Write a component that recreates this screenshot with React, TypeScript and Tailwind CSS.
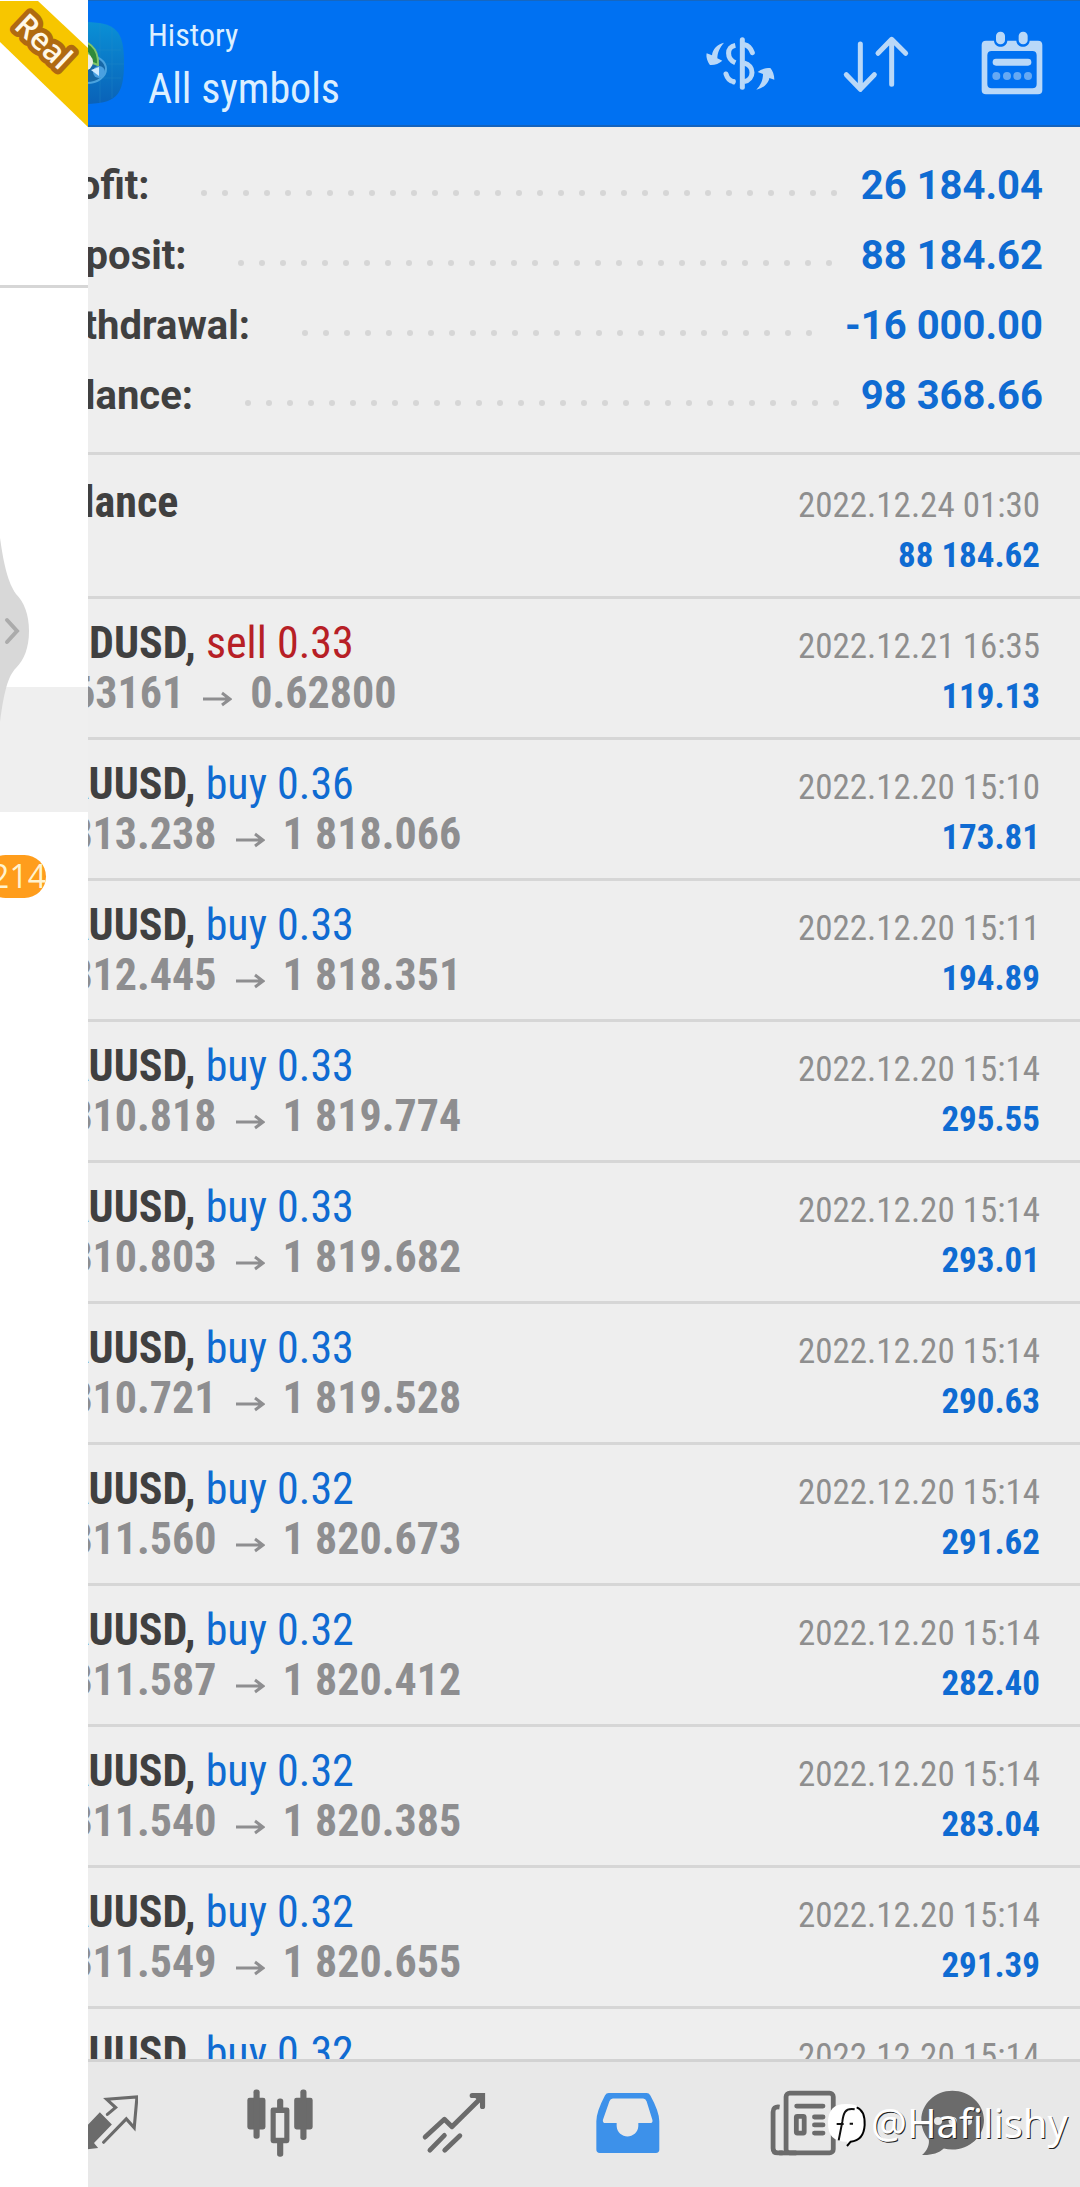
import React from "react";

type Deal = {
  symbol: string;
  side?: "buy" | "sell";
  lots?: string;
  open?: string;
  close?: string;
  time: string;
  profit?: string;
};

const summary = [
  { label: "Profit:", value: "26 184.04" },
  { label: "Deposit:", value: "88 184.62" },
  { label: "Withdrawal:", value: "-16 000.00" },
  { label: "Balance:", value: "98 368.66" },
];

const deals: Deal[] = [
  { symbol: "Balance", time: "2022.12.24 01:30", profit: "88 184.62" },
  { symbol: "AUDUSD", side: "sell", lots: "0.33", open: "0.63161", close: "0.62800", time: "2022.12.21 16:35", profit: "119.13" },
  { symbol: "XAUUSD", side: "buy", lots: "0.36", open: "1 813.238", close: "1 818.066", time: "2022.12.20 15:10", profit: "173.81" },
  { symbol: "XAUUSD", side: "buy", lots: "0.33", open: "1 812.445", close: "1 818.351", time: "2022.12.20 15:11", profit: "194.89" },
  { symbol: "XAUUSD", side: "buy", lots: "0.33", open: "1 810.818", close: "1 819.774", time: "2022.12.20 15:14", profit: "295.55" },
  { symbol: "XAUUSD", side: "buy", lots: "0.33", open: "1 810.803", close: "1 819.682", time: "2022.12.20 15:14", profit: "293.01" },
  { symbol: "XAUUSD", side: "buy", lots: "0.33", open: "1 810.721", close: "1 819.528", time: "2022.12.20 15:14", profit: "290.63" },
  { symbol: "XAUUSD", side: "buy", lots: "0.32", open: "1 811.560", close: "1 820.673", time: "2022.12.20 15:14", profit: "291.62" },
  { symbol: "XAUUSD", side: "buy", lots: "0.32", open: "1 811.587", close: "1 820.412", time: "2022.12.20 15:14", profit: "282.40" },
  { symbol: "XAUUSD", side: "buy", lots: "0.32", open: "1 811.540", close: "1 820.385", time: "2022.12.20 15:14", profit: "283.04" },
  { symbol: "XAUUSD", side: "buy", lots: "0.32", open: "1 811.549", close: "1 820.655", time: "2022.12.20 15:14", profit: "291.39" },
  { symbol: "XAUUSD", side: "buy", lots: "0.32", time: "2022.12.20 15:14" },
];

function AppLogo() {
  return (
    <svg className="size-[82px] shrink-0" viewBox="0 0 82 82" aria-hidden="true">
      <defs>
        <linearGradient id="tile" x1="0" y1="0" x2="0" y2="1">
          <stop offset="0" stopColor="#0a90d6" />
          <stop offset="1" stopColor="#0a62b8" />
        </linearGradient>
      </defs>
      <path d="M41 0C74 0 82 8 82 41C82 74 74 82 41 82C8 82 0 74 0 41C0 8 8 0 41 0Z" fill="url(#tile)" />
      <path d="M22 3V79M34 0V82M46 0V82M58 1V81M70 6V76M3 28H79M0 42H82M3 56H79" stroke="#2a8fc8" strokeWidth="1" opacity=".3" />
      <ellipse cx="45" cy="47" rx="19" ry="14" fill="#1668a8" stroke="#4aa3de" strokeWidth="2" />
      <path d="M30 20C46 16 57 26 56 43L48 40C49 30 42 26 30 27Z" fill="#2f8a3a" stroke="#7fc46c" strokeWidth="2" />
      <circle cx="42" cy="40" r="9" fill="#e9eee6" />
      <circle cx="57" cy="50" r="6" fill="#4aa0e0" />
      <path d="M49 48L57 45V54Z" fill="#cfeaff" />
    </svg>
  );
}

function CurrencyIcon() {
  return (
    <svg className="h-[60px] w-[70px]" viewBox="75 95 210 180" aria-hidden="true">
      <g fill="none" stroke="#b9d8f8" strokeWidth="15" strokeLinecap="round">
        <path d="M187 115V258" />
        <path d="M194 130C206 132 212 140 217 154" />
        <path d="M138 218C142 231 150 239 160 241" />
      </g>
      <g fill="none" stroke="#b9d8f8" strokeWidth="15">
        <path d="M166 132C139 137 139 172 166 184" />
        <path d="M192 185C224 192 224 235 192 241" />
        <path d="M158 241L165 242" />
      </g>
      <g fill="#b9d8f8">
        <path d="M132 124C112 129 98 143 96 162L80 156C77 168 84 184 90 191C104 192 117 187 127 178L112 171C112 153 120 138 132 124Z" />
        <path d="M229 265C250 261 266 246 268 230L283 235C283 221 278 208 271 200C256 200 243 204 233 212L249 218C249 237 241 253 229 265Z" />
      </g>
    </svg>
  );
}

function SortIcon() {
  return (
    <svg className="h-[60px] w-[70px]" viewBox="483 97 210 180" aria-hidden="true">
      <path
        d="M541 130V264M499 222L541 266L583 222M635 251V117M594 158L635 116L677 158"
        fill="none"
        stroke="#b9d8f8"
        strokeWidth="15"
        strokeLinecap="round"
        strokeLinejoin="round"
      />
    </svg>
  );
}

function CalendarIcon() {
  return (
    <svg className="h-[64px] w-[70px]" viewBox="900 93 192 192" aria-hidden="true">
      <path
        fillRule="evenodd"
        fill="#b9d8f8"
        d="M918 122H942C944 146 980 146 982 122H1009C1011 146 1047 146 1049 122H1074Q1087 122 1087 135V270Q1087 283 1074 283H918Q905 283 905 270V135Q905 122 918 122ZM935 153Q922 153 922 166V252Q922 265 935 265H1057Q1070 265 1070 252V166Q1070 153 1057 153Z"
      />
      <rect x="948" y="95" width="27" height="38" rx="13" fill="#b9d8f8" />
      <rect x="1016" y="95" width="27" height="38" rx="13" fill="#b9d8f8" />
      <rect x="938" y="176" width="116" height="21" rx="10" fill="#b9d8f8" />
      <g fill="#66a9f3">
        <circle cx="949" cy="228" r="12" />
        <circle cx="981" cy="228" r="12" />
        <circle cx="1012" cy="228" r="12" />
        <circle cx="1044" cy="228" r="12" />
      </g>
    </svg>
  );
}

function QuotesIcon() {
  return (
    <svg className="size-[66px]" viewBox="214 268 192 192" aria-hidden="true">
      <path d="M295 333L330 368L278 422L290 437L222 445L228 378L243 387Z" fill="#6b6b6b" />
      <path d="M317 339L341 319L315 295L403 288L395 378L372 352L306 420" fill="none" stroke="#6b6b6b" strokeWidth="9" strokeLinecap="round" />
    </svg>
  );
}

function CandlesIcon() {
  return (
    <svg className="h-[68px] w-[66px]" viewBox="717 266 193 198" aria-hidden="true">
      <g fill="#6b6b6b">
        <rect x="718" y="291" width="53" height="93" rx="7" />
        <rect x="736" y="267" width="18" height="144" rx="8" />
        <rect x="855" y="291" width="54" height="93" rx="7" />
        <rect x="873" y="267" width="18" height="148" rx="8" />
        <rect x="805" y="293" width="18" height="38" rx="8" />
        <rect x="805" y="410" width="18" height="54" rx="8" />
        <path fillRule="evenodd" d="M793 320H834Q841 320 841 327V417Q841 424 834 424H793Q786 424 786 417V327Q786 320 793 320ZM801 336V408H826V336Z" />
      </g>
    </svg>
  );
}

function TrendIcon() {
  return (
    <svg className="h-[64px] w-[66px]" viewBox="1220 270 192 186" aria-hidden="true">
      <path
        d="M1232 404L1288 352L1310 374L1396 289M1246 442L1288 399M1289 442L1333 400"
        fill="none"
        stroke="#6b6b6b"
        strokeWidth="14"
        strokeLinecap="round"
        strokeLinejoin="round"
      />
      <path d="M1369 283H1399V315" fill="none" stroke="#6b6b6b" strokeWidth="15" strokeLinecap="round" />
      <path d="M1378 290H1400V312Z" fill="#6b6b6b" />
    </svg>
  );
}

function InboxIcon() {
  return (
    <svg className="h-[62px] w-[64px]" viewBox="161 274 186 178" aria-hidden="true">
      <path
        fillRule="evenodd"
        fill="#3d91ea"
        d="M198 276H308Q315 276 319 283Q345 330 345 358V440Q345 450 335 450H172Q162 450 162 440V358Q162 330 187 283Q191 276 198 276ZM210 292Q203 292 200 300L181 354Q180 363 188 363H221V372C223 412 282 412 284 372V363H318Q327 363 325 354L308 300Q305 292 298 292Z"
      />
    </svg>
  );
}

function NewsIcon() {
  return (
    <svg className="h-[66px] w-[66px]" viewBox="663 266 193 193" aria-hidden="true">
      <g fill="none" stroke="#6b6b6b" strokeWidth="14">
        <path d="M691 316C678 314 672 320 672 330V436Q672 450 686 450H700" />
        <rect x="710" y="275" width="138" height="175" rx="11" />
        <path d="M690 450H740" />
        <path d="M741 313H818M793 345H818M793 368H818M793 392H818" strokeLinecap="round" />
        <rect x="740" y="343" width="23" height="49" rx="3" />
      </g>
    </svg>
  );
}

function ChatIcon() {
  return (
    <svg className="h-[66px] w-[64px]" viewBox="1100 266 186 194" aria-hidden="true">
      <path d="M1191 268C1242 268 1284 307 1284 354C1284 402 1242 441 1191 441Q1178 441 1166 438C1150 452 1130 458 1102 457C1116 444 1124 430 1122 412C1108 396 1100 376 1100 354C1100 307 1140 268 1191 268Z" fill="#6b6b6b" />
      <g fill="#e8e8e8">
        <circle cx="1149" cy="357" r="12" />
        <circle cx="1192" cy="357" r="12" />
        <circle cx="1237" cy="357" r="12" />
      </g>
    </svg>
  );
}

const tabs = [
  { name: "Quotes", icon: <QuotesIcon /> },
  { name: "Charts", icon: <CandlesIcon /> },
  { name: "Trade", icon: <TrendIcon /> },
  { name: "History", icon: <InboxIcon /> },
  { name: "News", icon: <NewsIcon /> },
  { name: "Messages", icon: <ChatIcon /> },
];

function SummaryRow({ label, value }: { label: string; value: string }) {
  return (
    <div className="flex h-[70px] items-center text-[40px] font-bold">
      <dt className="text-[#404040]">{label}</dt>
      <div aria-hidden="true" className="mt-3.5 mr-3 ml-11 flex h-[6px] flex-1 flex-wrap overflow-hidden">
        {Array.from({ length: 48 }, (_, i) => (
          <span key={i} className="flex h-5 w-[21px] justify-center">
            <span className="size-[6px] rounded-full bg-[#d6d6d6]" />
          </span>
        ))}
      </div>
      <dd className="text-[#0f6bd2]">{value}</dd>
    </div>
  );
}

function DealRow({ deal }: { deal: Deal }) {
  return (
    <li className="flex h-[141px] shrink-0 items-baseline justify-between border-b-[3px] border-[#d6d6d6] pt-[19px] pr-10 pl-[38px] font-['Roboto_Condensed','Roboto',sans-serif] leading-[50px] first:h-36 first:pt-[22px]">
      <div className="text-[44px]">
        <p className="text-[#404040]">
          <span className="font-bold">{deal.symbol}</span>
          {deal.side && (
            <>
              <span className="font-bold">, </span>
              <span className={deal.side === "sell" ? "text-[#b71f26]" : "text-[#0f6bd2]"}>
                {deal.side} {deal.lots}
              </span>
            </>
          )}
        </p>
        {deal.open && (
          <p className="flex items-center font-bold text-[#8e8e90]">
            {deal.open}
            <svg className="mx-[18px] mt-3 h-4 w-[30px]" viewBox="0 0 30 16" role="img" aria-label="to">
              <path d="M1 8H28M20 2L28 8L20 14" fill="none" stroke="currentColor" strokeWidth="3" />
            </svg>
            {deal.close}
          </p>
        )}
      </div>
      <div className="text-right text-[35px]">
        <p className="text-[#8e8e8e]">{deal.time}</p>
        {deal.profit && <p className="font-bold text-[#0f6bd2]">{deal.profit}</p>}
      </div>
    </li>
  );
}

function Drawer() {
  return (
    <aside className="absolute inset-y-0 left-0 w-[88px] overflow-hidden bg-white">
      <div className="h-[288px] border-b-[3px] border-[#d6d6d6]">
        <svg className="h-32 w-[88px]" viewBox="0 0 88 128" role="img" aria-label="Real">
          <path d="M0 1H38L88 48V127L0 42Z" fill="#f7c600" />
          <text
            x="43"
            y="52"
            textAnchor="middle"
            transform="rotate(43 43 42)"
            fontFamily="'Open Sans', sans-serif"
            fontSize="31"
            fontWeight="600"
            fill="#fff8e8"
            stroke="#b06a10"
            strokeWidth="10"
            strokeLinejoin="round"
            paintOrder="stroke"
          >
            Real
          </text>
        </svg>
      </div>
      <div className="mt-[399px] h-[125px] bg-[#efefef]" />
      <div className="flex h-[128px] items-center">
        <span className="-ml-4 flex h-[43px] w-[62px] shrink-0 items-center justify-end rounded-full bg-[#ff9d1c] font-['Open_Sans',sans-serif] text-[32px] text-[#fff3cf]">
          214
        </span>
      </div>
      <button type="button" aria-label="Open menu" className="absolute top-[530px] left-0 h-[200px] w-[30px]">
        <svg className="h-[200px] w-[30px]" viewBox="0 0 30 200" aria-hidden="true">
          <path d="M0 8C4 36 8 52 16 64C24 72 29 84 29 101C29 118 24 130 16 138C8 146 4 162 0 192Z" fill="#d8d8d8" />
          <path d="M7 90L17 101L7 112" fill="none" stroke="#ababab" strokeWidth="4" strokeLinecap="round" />
        </svg>
      </button>
    </aside>
  );
}

function Watermark() {
  return (
    <div className="pointer-events-none absolute right-3 bottom-9 flex items-center gap-1 font-['Noto_Sans',sans-serif] text-[40px] leading-[56px] text-white [text-shadow:1px_1px_0_#222]">
      <svg className="mt-1 h-[44px] w-[40px]" viewBox="850 318 118 132" aria-hidden="true">
        <path d="M905 321C945 320 963 336 963 378C963 414 948 431 920 433L910 447L909 434C868 434 852 416 852 378C852 338 870 321 905 321Z" fill="#fff" />
        <path d="M938 331C958 338 963 356 962 384C960 416 944 432 920 434L909 447" fill="none" stroke="#000" strokeWidth="6" />
        <path d="M932 337C902 332 898 350 895 374L884 430M878 381H899M917 380H927" fill="none" stroke="#111" strokeWidth="6" />
      </svg>
      @Hafilishy
    </div>
  );
}

export default function App() {
  return (
    <div className="relative flex h-screen flex-col overflow-hidden bg-[#eeeeee] font-['Roboto',sans-serif]">
      <header className="flex h-[127px] shrink-0 items-center border-t border-b-2 border-t-[#1667c0] border-b-[#1463bd] bg-[#0071f2] pr-[33px] pl-[42px] text-[#dcefff]">
        <AppLogo />
        <div className="ml-6 flex-1 font-['Roboto_Condensed','Roboto',sans-serif]">
          <p className="text-[32px] leading-[52px]">History</p>
          <h1 className="text-[42px] leading-[56px]">All symbols</h1>
        </div>
        <div className="flex items-center gap-[66px]">
          <button type="button" aria-label="Currency"><CurrencyIcon /></button>
          <button type="button" aria-label="Sort"><SortIcon /></button>
          <button type="button" aria-label="Calendar"><CalendarIcon /></button>
        </div>
      </header>

      <main className="flex min-h-0 flex-1 flex-col overflow-hidden">
        <dl className="border-b-[3px] border-[#d6d6d6] pt-6 pr-[37px] pb-[21px] pl-[38px]">
          {summary.map((row) => (
            <SummaryRow key={row.label} {...row} />
          ))}
        </dl>
        <ul className="flex flex-col">
          {deals.map((deal, i) => (
            <DealRow key={i} deal={deal} />
          ))}
        </ul>
      </main>

      <nav className="grid h-32 shrink-0 grid-cols-[repeat(5,174fr)_126fr] items-center border-t-[3px] border-[#d2d2d2] bg-[#e8e8e8] pr-16 pb-1 pl-[18px]">
        {tabs.map((tab) => (
          <button key={tab.name} type="button" aria-label={tab.name} className="flex justify-center">
            {tab.icon}
          </button>
        ))}
      </nav>

      <Drawer />
      <Watermark />
    </div>
  );
}
